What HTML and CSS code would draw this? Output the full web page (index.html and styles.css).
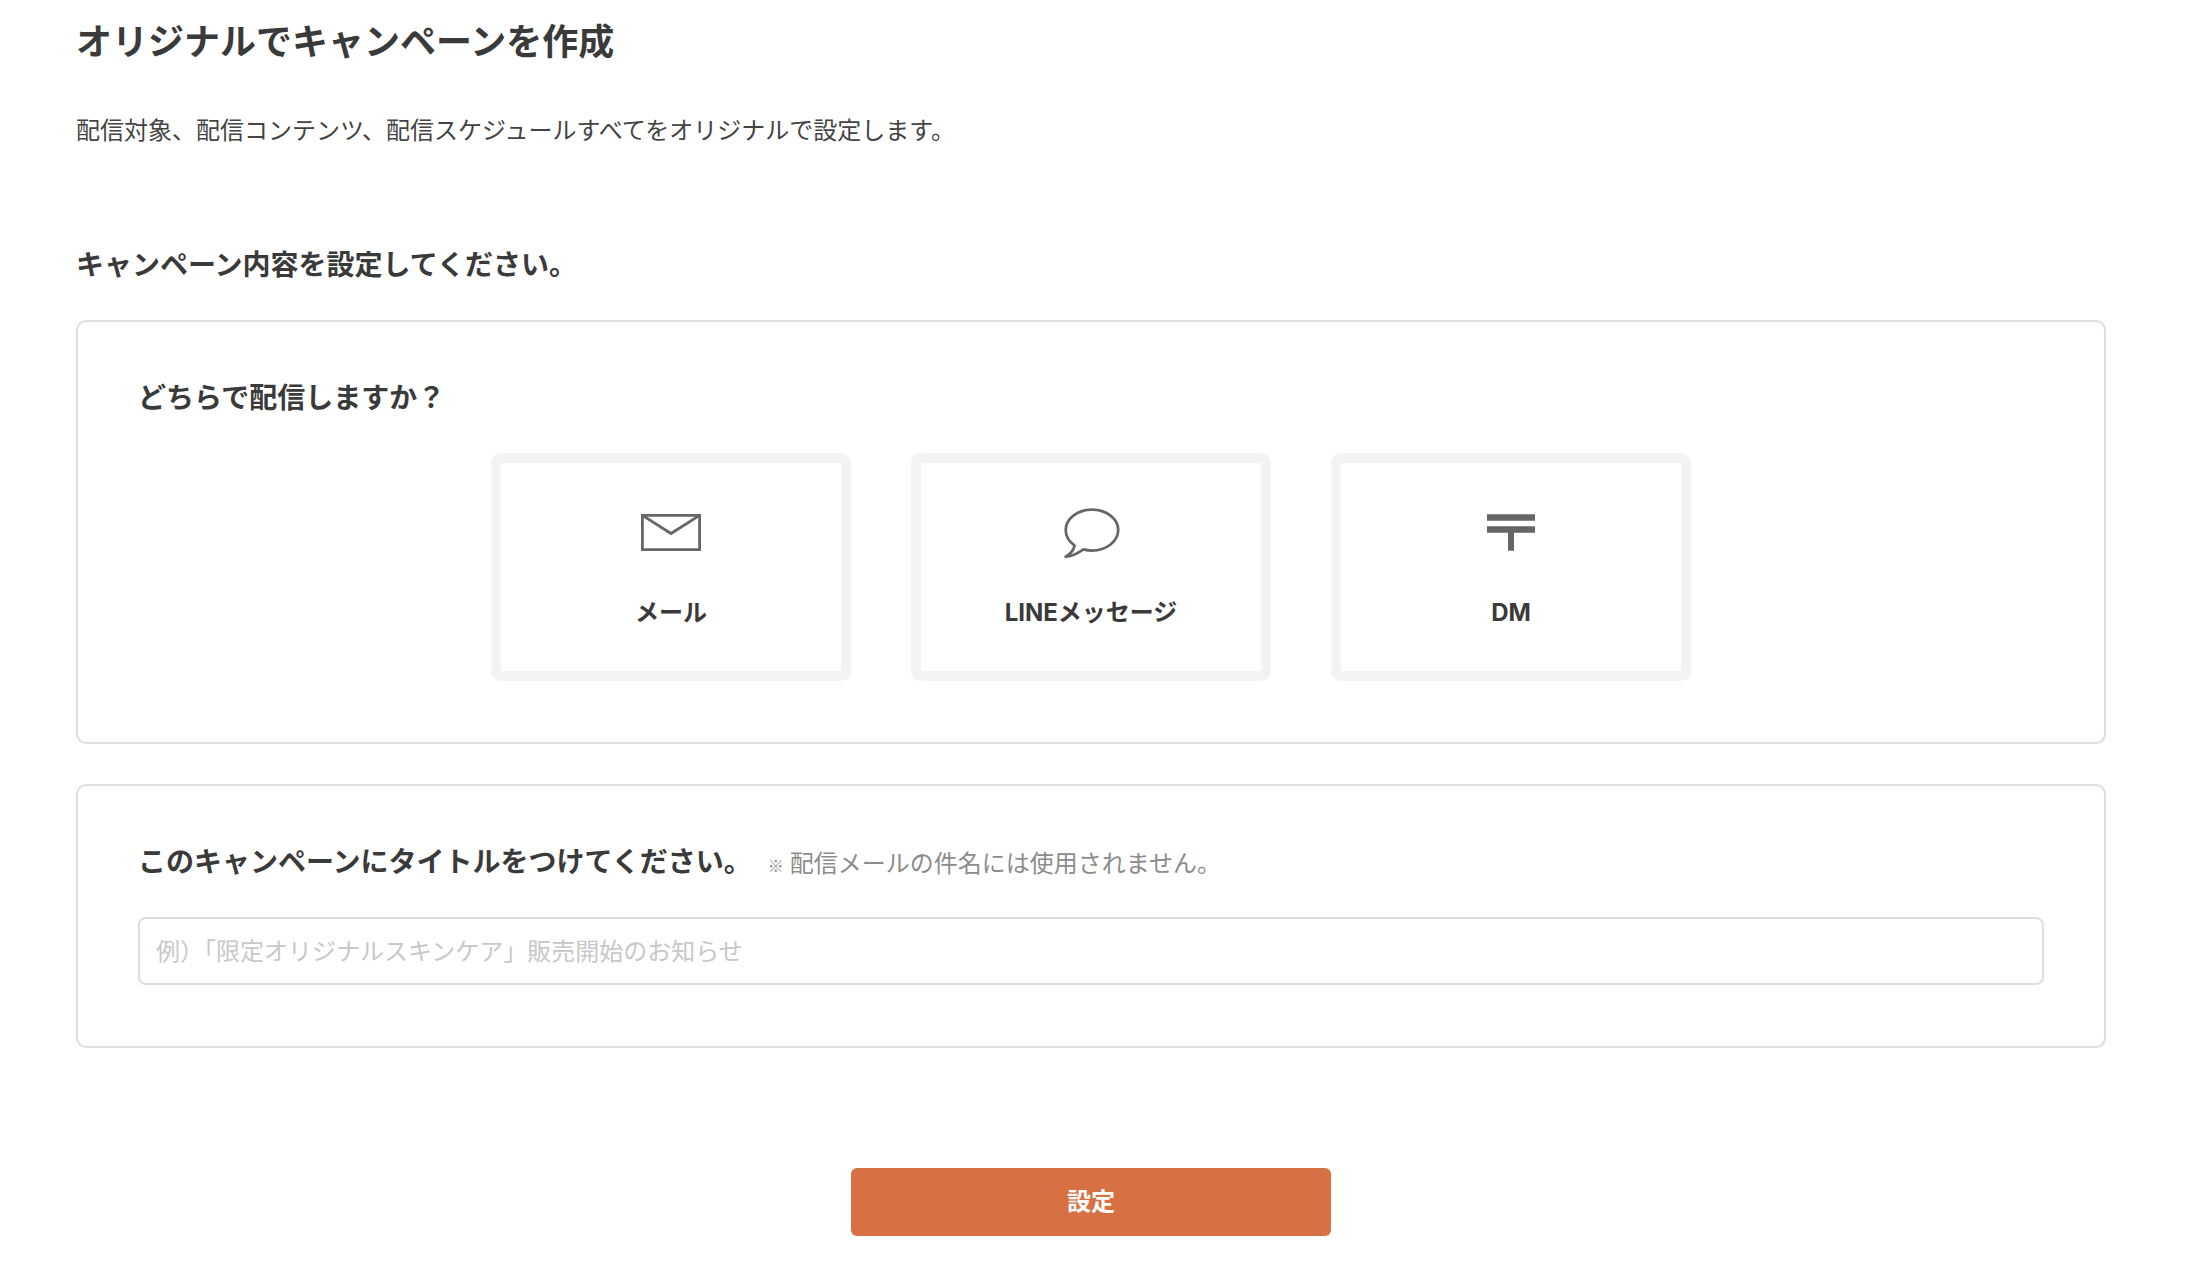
FILE: index.html
```html
<!DOCTYPE html>
<html lang="ja">
<head>
<meta charset="utf-8">
<meta name="viewport" content="width=device-width, initial-scale=1">
<title>オリジナルでキャンペーンを作成</title>
<link rel="stylesheet" href="styles.css">
</head>
<body>
<main class="page">
  <h1 class="page-title">オリジナルでキャンペーンを作成</h1>
  <p class="lead">配信対象、配信コンテンツ、配信スケジュールすべてをオリジナルで設定します。</p>

  <form class="campaign">
    <h2 class="section-title">キャンペーン内容を設定してください。</h2>

    <section class="panel">
      <h3 class="question" id="channel-question">どちらで配信しますか？</h3>
      <div class="channels" role="group" aria-labelledby="channel-question">
        <button class="channel" type="button">
          <svg class="channel-icon" viewBox="0 0 60 60" aria-hidden="true">
            <path d="M1.4 12.4h57.2v34.3H1.4zM1.4 12.4 30 30.5 58.6 12.4" fill="none" stroke="#666" stroke-width="2.8"/>
          </svg>
          <span class="channel-name">メール</span>
        </button>
        <button class="channel" type="button">
          <svg class="channel-icon" viewBox="0 0 60 60" aria-hidden="true">
            <path d="M22.5 46.4C25.300 47.200 28 47.600 31 47.600C45.600 47.600 57.200 38.300 57.200 27.100C57.200 15.900 45.600 6.600 31 6.600C16.400 6.600 4.700 15.900 4.700 27.100C4.700 33.100 8 38.600 13.600 42.600C12.800 46 9.500 51 4.600 53.700C11 53.900 17.500 49.800 22.500 46.400Z" fill="none" stroke="#666" stroke-width="2.700" stroke-linejoin="round"/>
          </svg>
          <span class="channel-name">LINEメッセージ</span>
        </button>
        <button class="channel" type="button">
          <svg class="channel-icon" viewBox="0 0 60 60" aria-hidden="true">
            <path d="M6 11.300h48v6.400H6zM6 23.300h48v6.400H33v18h-6v-18H6z" fill="#666"/>
          </svg>
          <span class="channel-name">DM</span>
        </button>
      </div>
    </section>

    <section class="panel">
      <div class="question-row">
        <label class="question" for="campaign-title">このキャンペーンにタイトルをつけてください。</label>
        <span class="note" id="title-note"><span class="note-mark">※</span>配信メールの件名には使用されません。</span>
      </div>
      <input class="title-input" id="campaign-title" type="text" aria-describedby="title-note" placeholder="例）「限定オリジナルスキンケア」販売開始のお知らせ">
    </section>

    <button class="submit" type="submit">設定</button>
  </form>
</main>
</body>
</html>
```
FILE: styles.css
```css
*,
*::before,
*::after {
  box-sizing: border-box;
}

body {
  margin: 0;
  background: #fff;
  color: #3a3a3a;
  font-family: "Noto Sans CJK JP", sans-serif;
  font-size: 24px;
  line-height: 36px;
}

h1,
h2,
h3,
p {
  margin: 0;
}

button,
input {
  font: inherit;
  color: inherit;
}

.page {
  padding: 12px 85px 20px 76px;
}

.page-title {
  font-size: 36px;
  font-weight: 700;
  line-height: 54px;
}

.lead {
  margin-top: 45px;
  color: #444;
}

.campaign {
  display: flex;
  flex-direction: column;
  margin-top: 95px;
}

.section-title,
.question {
  font-size: 28px;
  font-weight: 700;
  line-height: 42px;
}

.panel {
  display: flex;
  flex-direction: column;
  gap: 36px;
  margin-top: 36px;
  padding: 53px 60px 61px;
  border: 2px solid #dedede;
  border-radius: 10px;
}

.panel + .panel {
  margin-top: 40px;
}

.channels {
  display: flex;
  flex-wrap: wrap;
  justify-content: center;
  gap: 60px;
}

.channel {
  display: flex;
  flex-direction: column;
  align-items: center;
  gap: 32px;
  width: 360px;
  padding: 40px 20px;
  border: 10px solid #f3f3f3;
  border-radius: 10px;
  background: #fff;
  cursor: pointer;
}

.channel-icon {
  width: 60px;
  height: 60px;
}

.channel-name {
  font-family: Inter, "Noto Sans CJK JP", sans-serif;
  font-weight: 700;
}

.question-row {
  display: flex;
  flex-wrap: wrap;
  align-items: baseline;
  column-gap: 16px;
}

.note {
  color: #8c8c8c;
  line-height: 24px;
}

.note-mark {
  margin-right: 6px;
  font-size: 16px;
}

.title-input {
  width: 100%;
  height: 68px;
  padding: 0 16px 4px;
  border: 2px solid #dedede;
  border-radius: 8px;
  background: #fff;
}

.title-input::placeholder {
  color: #c8c8c8;
  opacity: 1;
}

.submit {
  align-self: center;
  width: 480px;
  height: 68px;
  margin-top: 120px;
  padding: 0 0 4px;
  border: 0;
  border-radius: 6px;
  background: #d77042;
  color: #fff;
  font-weight: 700;
  cursor: pointer;
}
```
